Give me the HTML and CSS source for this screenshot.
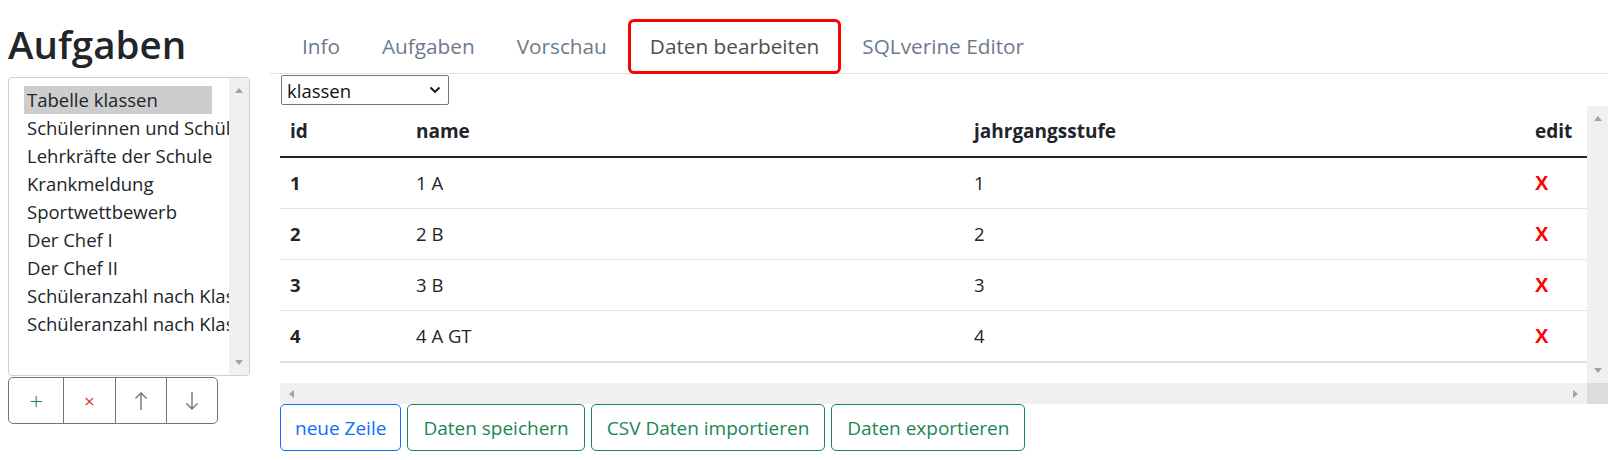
FILE: index.html
```html
<!DOCTYPE html>
<html lang="de">
<head>
<meta charset="utf-8">
<title>Aufgaben</title>
<link rel="stylesheet" href="styles.css">
</head>
<body>
<div class="page">
  <aside class="side">
    <h2 class="title">Aufgaben</h2>
    <div class="listbox">
      <div class="list-items">
        <div class="item selected">Tabelle klassen</div>
        <div class="item">Schülerinnen und Schüler</div>
        <div class="item">Lehrkräfte der Schule</div>
        <div class="item">Krankmeldung</div>
        <div class="item">Sportwettbewerb</div>
        <div class="item">Der Chef I</div>
        <div class="item">Der Chef II</div>
        <div class="item">Schüleranzahl nach Klassen</div>
        <div class="item">Schüleranzahl nach Klassen</div>
      </div>
      <div class="vscroll small">
        <span class="arr up"></span>
        <span class="arr down"></span>
      </div>
    </div>
    <div class="btn-group">
      <button class="gbtn w56 plus" aria-label="hinzufügen">+</button>
      <button class="gbtn w52 del" aria-label="löschen">×</button>
      <button class="gbtn w51 mv" aria-label="nach oben"><svg width="14" height="20" viewBox="0 0 14 20"><path d="M7 2 V19 M1.5 7.5 L7 2 L12.5 7.5" fill="none" stroke="#6c757d" stroke-width="1.4"/></svg></button>
      <button class="gbtn w51 mv" aria-label="nach unten"><svg width="14" height="20" viewBox="0 0 14 20"><path d="M7 1 V18 M1.5 12.5 L7 18 L12.5 12.5" fill="none" stroke="#6c757d" stroke-width="1.4"/></svg></button>
    </div>
  </aside>
  <main class="main">
    <nav class="tabs">
      <a class="tab">Info</a>
      <a class="tab">Aufgaben</a>
      <a class="tab">Vorschau</a>
      <a class="tab active">Daten bearbeiten</a>
      <a class="tab">SQLverine Editor</a>
    </nav>
    <div class="tab-content">
      <div class="select">
        <span>klassen</span>
        <svg width="12" height="8" viewBox="0 0 12 8"><path d="M1.5 1.5 L6 6 L10.5 1.5" fill="none" stroke="#111" stroke-width="1.8"/></svg>
      </div>
      <div class="scroller">
        <div class="scroll-content">
          <table class="data">
            <colgroup>
              <col class="c-id"><col class="c-name"><col class="c-jg"><col class="c-edit">
            </colgroup>
            <thead>
              <tr><th>id</th><th>name</th><th>jahrgangsstufe</th><th>edit</th></tr>
            </thead>
            <tbody>
              <tr><td class="b">1</td><td>1 A</td><td>1</td><td class="x">X</td></tr>
              <tr><td class="b">2</td><td>2 B</td><td>2</td><td class="x">X</td></tr>
              <tr><td class="b">3</td><td>3 B</td><td>3</td><td class="x">X</td></tr>
              <tr class="last"><td class="b">4</td><td>4 A GT</td><td>4</td><td class="x">X</td></tr>
            </tbody>
          </table>
        </div>
        <div class="vscroll big">
          <span class="arr up"></span>
          <span class="arr down"></span>
        </div>
        <div class="hscroll">
          <span class="arr left"></span>
          <span class="arr right"></span>
        </div>
        <div class="corner"></div>
      </div>
      <div class="actions">
        <button class="obtn blue">neue Zeile</button>
        <button class="obtn green">Daten speichern</button>
        <button class="obtn green">CSV Daten importieren</button>
        <button class="obtn green">Daten exportieren</button>
      </div>
    </div>
  </main>
</div>
</body>
</html>
```

FILE: styles.css
```css
* { box-sizing: border-box; }
html, body { margin: 0; padding: 0; background: #fff; }
body {
  font-family: "Open Sans", "Noto Sans", sans-serif;
  color: #212529;
  font-size: 18.5px;
}
.page {
  display: flex;
  gap: 20px;
  padding: 0 5px 0 8px;
  width: 1613px;
  height: 460px;
  overflow: hidden;
}
.side {
  width: 242px;
  flex: none;
  display: flex;
  flex-direction: column;
}
.title {
  margin: 20px 0 9px 0;
  font-size: 38.5px;
  line-height: 48px;
  font-weight: 600;
  color: #212529;
}
.listbox {
  height: 299px;
  border: 1px solid #cfcfcf;
  border-radius: 4px;
  display: flex;
  overflow: hidden;
}
.list-items {
  flex: 1;
  overflow: hidden;
  padding: 8px 0 0 15px;
}
.item {
  height: 28px;
  line-height: 28px;
  padding: 0 3px;
  white-space: nowrap;
  font-size: 18.5px;
}
.item.selected {
  background: #cdcdcd;
  width: 188px;
}
.vscroll {
  background: #f0f0f0;
  display: flex;
  flex-direction: column;
  justify-content: space-between;
  align-items: center;
}
.vscroll.small {
  width: 20px;
  flex: none;
  padding: 10px 0 10px 0;
}
.vscroll.big {
  padding: 10px 0 10px 0;
}
.arr {
  display: block;
  width: 0;
  height: 0;
}
.arr.up {
  border-left: 4.5px solid transparent;
  border-right: 4.5px solid transparent;
  border-bottom: 5px solid #a3a3a3;
}
.arr.down {
  border-left: 4.5px solid transparent;
  border-right: 4.5px solid transparent;
  border-top: 5px solid #a3a3a3;
}
.arr.left {
  border-top: 4.5px solid transparent;
  border-bottom: 4.5px solid transparent;
  border-right: 5px solid #a3a3a3;
}
.arr.right {
  border-top: 4.5px solid transparent;
  border-bottom: 4.5px solid transparent;
  border-left: 5px solid #a3a3a3;
}
.btn-group {
  display: flex;
  margin-top: 1px;
}
.gbtn {
  height: 47px;
  background: #fff;
  border: 1px solid #6c757d;
  margin-left: -1px;
  font-family: "Open Sans", sans-serif;
  font-size: 20px;
  padding: 0;
  display: flex;
  align-items: center;
  justify-content: center;
}
.gbtn:first-child {
  margin-left: 0;
  border-radius: 5px 0 0 5px;
}
.gbtn:last-child { border-radius: 0 5px 5px 0; }
.w56 { width: 56px; }
.w52 { width: 53px; }
.w51 { width: 52px; }
.plus { color: #198754; font-size: 24px; font-weight: 300; }
.del { color: #dc3545; font-size: 19px; }
.mv svg { display: block; }

.main {
  flex: 1;
  min-width: 0;
  display: flex;
  flex-direction: column;
}
.tabs {
  display: flex;
  align-items: flex-end;
  padding: 19px 0 0 11px;
  border-bottom: 1px solid #dee2e6;
}
.tab {
  display: block;
  padding: 10px 20px;
  line-height: 33px;
  font-size: 20.75px;
  color: #6c7a8b;
  border: 1px solid transparent;
  border-radius: 6px;
  margin-bottom: -1px;
  white-space: nowrap;
}
.tab.active {
  padding: 8px 19px;
  border: 3px solid #f00;
  color: #495057;
  background: #fff;
}
.tab-content {
  padding-left: 10px;
}
.select {
  margin: 1px 0 0 1px;
  width: 168px;
  height: 30px;
  border: 1px solid #767676;
  border-radius: 2px;
  display: flex;
  align-items: center;
  justify-content: space-between;
  padding: 0 7px 0 5px;
  font-size: 18.5px;
  color: #111;
}
.scroller {
  margin-top: 1px;
  display: grid;
  grid-template-columns: 1307px 21px;
  grid-template-rows: 277px 21px;
  width: 1328px;
}
.scroll-content {
  overflow: hidden;
}
.hscroll {
  background: #f0f0f0;
  display: flex;
  justify-content: space-between;
  align-items: center;
  padding: 0 9px 0 9px;
}
.corner { background: #dcdcdc; }
.data {
  border-collapse: collapse;
  table-layout: fixed;
  width: 1307px;
}
.c-id { width: 126px; }
.c-name { width: 558px; }
.c-jg { width: 561px; }
.c-edit { width: 62px; }
.data th, .data td {
  text-align: left;
  padding: 10px;
  line-height: 30px;
  font-size: 18.5px;
  white-space: nowrap;
}
.data th {
  font-weight: 700;
  font-size: 19px;
  border-bottom: 2px solid #212529;
}
.data td {
  border-bottom: 1px solid #e3e3e6;
}
.data tr.last td {
  border-bottom: 2px solid #dee2e6;
}
.data td.b { font-weight: 700; }
.data td.x {
  color: #f00;
  font-weight: 700;
  font-family: "Liberation Sans", Arial, sans-serif;
  font-size: 20px;
}
.actions {
  display: flex;
  gap: 6px;
}
.obtn {
  height: 47px;
  padding: 0 15px;
  border-radius: 5px;
  background: #fff;
  font-family: "Open Sans", sans-serif;
  font-size: 19px;
  line-height: 30px;
}
.obtn.blue { border: 1px solid #0d6efd; color: #0d6efd; padding: 0 14px; }
.obtn.green { border: 1px solid #198754; color: #198754; }
```
